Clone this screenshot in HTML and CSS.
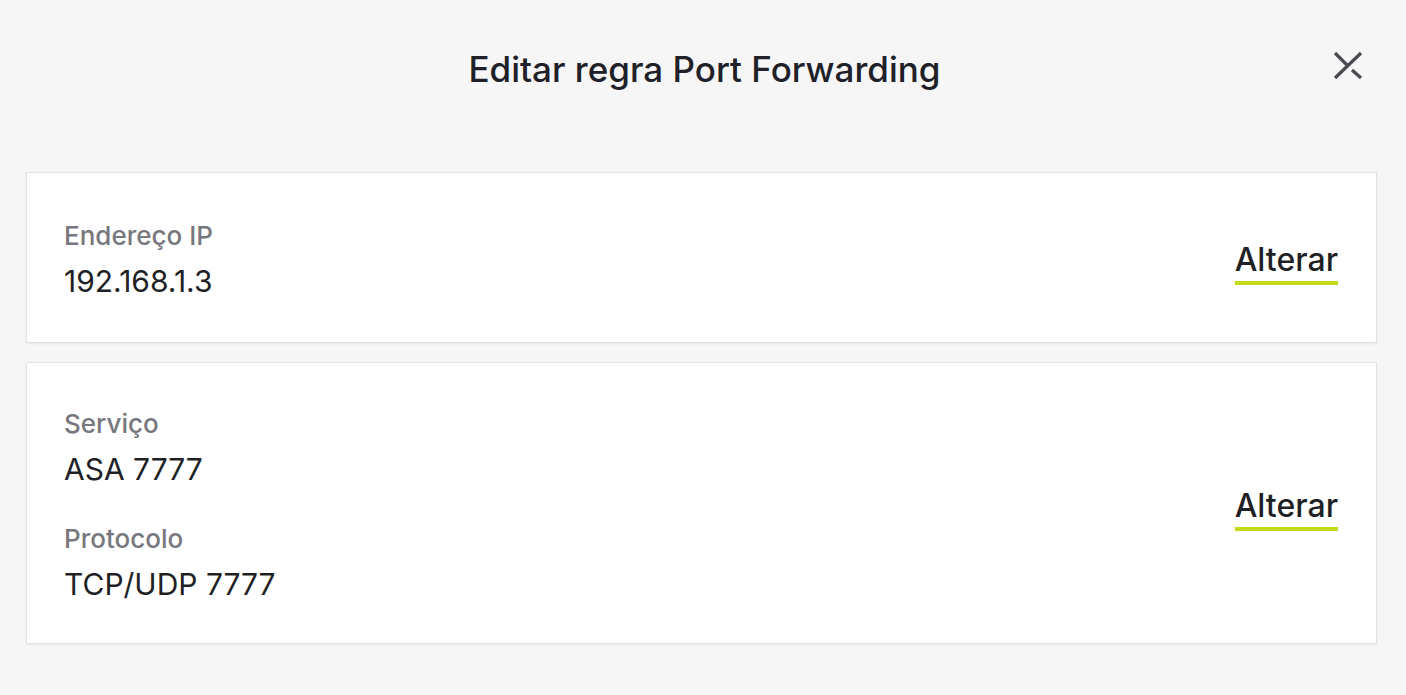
FILE: index.html
```html
<!DOCTYPE html>
<html lang="pt">
<head>
<meta charset="utf-8">
<title>Editar regra Port Forwarding</title>
<link rel="stylesheet" href="styles.css">
</head>
<body>
<div class="dialog">
  <header class="header">
    <h1 class="title">Editar regra Port Forwarding</h1>
    <button class="close" aria-label="Fechar">
      <svg width="30" height="30" viewBox="0 0 30 30" fill="none" stroke="#4a4a52" stroke-width="3.2">
        <path d="M2 3 L15 16"/>
        <path d="M19 20 L28 28"/>
        <path d="M2 28 L28 3"/>
      </svg>
    </button>
  </header>
  <section class="card card-ip">
    <div class="fields">
      <div class="field">
        <div class="label">Endereço IP</div>
        <div class="value">192.168.1.3</div>
      </div>
    </div>
    <a class="action" href="#">Alterar</a>
  </section>
  <section class="card card-svc">
    <div class="fields">
      <div class="field">
        <div class="label">Serviço</div>
        <div class="value">ASA 7777</div>
      </div>
      <div class="field">
        <div class="label">Protocolo</div>
        <div class="value">TCP/UDP 7777</div>
      </div>
    </div>
    <a class="action" href="#">Alterar</a>
  </section>
</div>
</body>
</html>
```
FILE: styles.css
```css
html, body {
  margin: 0;
  padding: 0;
  background: #f6f6f6;
}
body {
  font-family: Inter, "Noto Sans", sans-serif;
  color: #1f1f26;
}
.dialog {
  padding: 0 30px 40px 27px;
}
.header {
  position: relative;
  height: 173px;
  display: flex;
  justify-content: center;
}
.title {
  margin: 46px 0 0 6px;
  font-size: 35px;
  font-weight: 500;
  line-height: 46px;
  color: #202028;
}
.close {
  position: absolute;
  right: 13px;
  top: 50px;
  background: none;
  border: 0;
  padding: 0;
  width: 30px;
  height: 30px;
}
.card {
  background: #fff;
  box-shadow: 0 0 0 1px #e2e2e6, 0 1px 3px rgba(0,0,0,0.12);
  display: flex;
  align-items: center;
  justify-content: space-between;
  padding: 6px 38px 0 37px;
  box-sizing: border-box;
}
.card-ip {
  height: 169px;
  margin-bottom: 21px;
}
.card-svc {
  height: 280px;
}
.fields {
  display: flex;
  flex-direction: column;
  gap: 32px;
}
.label {
  font-size: 26px;
  line-height: 34px;
  font-weight: 500;
  color: #77777d;
}
.value {
  font-size: 30px;
  line-height: 42px;
  color: #1f1f26;
  margin-top: 7px;
}
.action {
  font-size: 32px;
  font-weight: 500;
  color: #1f1f26;
  text-decoration: none;
  border-bottom: 4px solid #c4d918;
  padding-bottom: 3px;
  line-height: 36px;
  margin-top: 6px;
}
```
